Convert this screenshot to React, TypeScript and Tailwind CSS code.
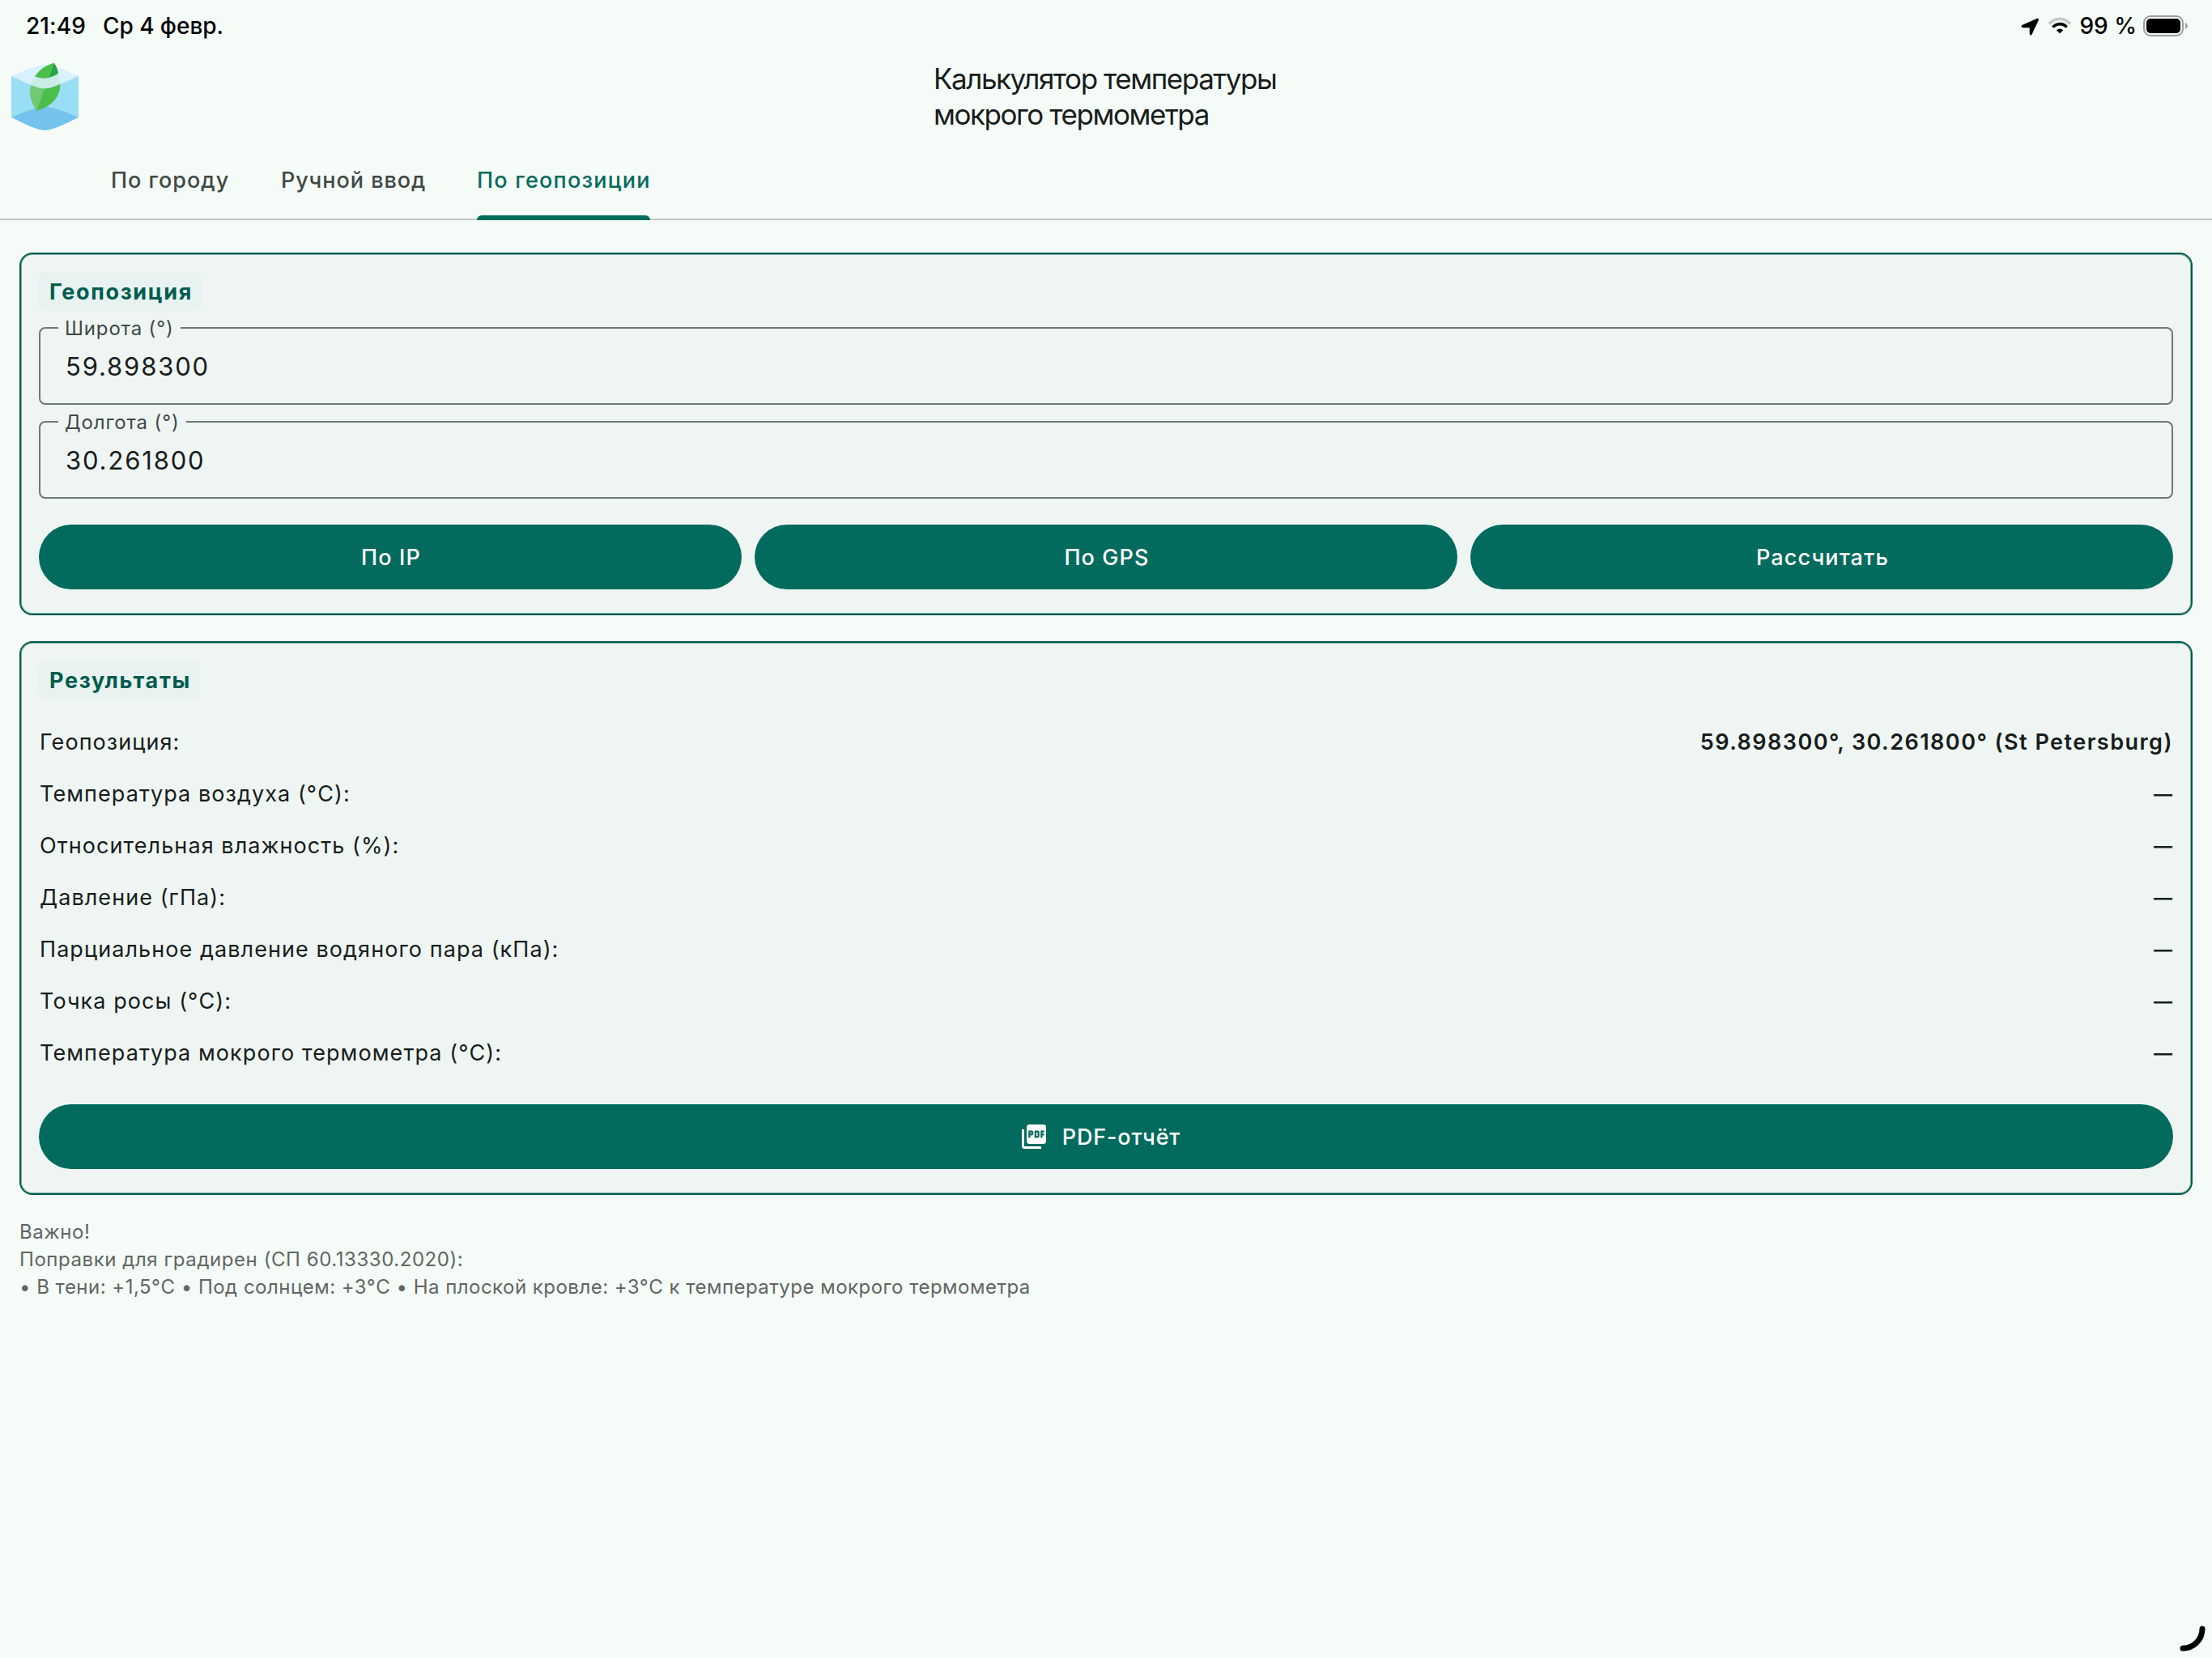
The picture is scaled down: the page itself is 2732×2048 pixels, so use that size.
import React from 'react';
import { MdPictureAsPdf } from 'react-icons/md';

const rows = [
  { label: 'Геопозиция:', value: '59.898300°, 30.261800° (St Petersburg)' },
  { label: 'Температура воздуха (°C):' },
  { label: 'Относительная влажность (%):' },
  { label: 'Давление (гПа):' },
  { label: 'Парциальное давление водяного пара (кПа):' },
  { label: 'Точка росы (°C):' },
  { label: 'Температура мокрого термометра (°C):' },
];

const Logo: React.FC = () => (
  <svg className="w-[84px] h-[84px]" viewBox="42 232 252 252">
    <path d="M42 283L42 435Q140 396 166 396Q195 396 291 435L291 283Z" fill="#98def5" />
    <path d="M42 435Q135 396 166 396Q198 396 291 435Q198 484 166 484Q135 484 42 435Z" fill="#73c3ec" />
    <path d="M42 283Q135 240 166 240Q198 240 291 283Q195 329 166 329Q138 329 42 283Z" fill="#d9f1fc" />
    {/* leaf under water */}
    <path d="M135 411C108 370 107 330 116 317Q150 330 165 329Z" fill="#6fca70" />
    <path d="M135 411L165 329Q185 329 223 312C224 365 185 398 135 411Z" fill="#4cbe4c" />
    {/* leaf seen through the surface */}
    <path d="M116 317C119 304 124 294 129 284Q155 298 216 274C220 286 223 298 223 312Q185 329 165 329Q150 330 116 317Z" fill="#c9ece6" />
    {/* leaf tip above the cube */}
    <path d="M129 284C145 259 172 241 201 234L183 289Q150 295 129 284Z" fill="#4cbe4c" />
    <path d="M201 234C208 245 214 258 216 273Q200 284 182 288Z" fill="#27a445" />
  </svg>
);

const StatusBar: React.FC = () => (
  <div className="flex items-center justify-between h-16 pl-8 pr-[29px] text-[28px] font-medium text-black">
    <div className="flex items-center">
      <span className="w-[95px] tracking-[0.1px]">21:49</span>
      <span className="tracking-[-0.06px]">Ср 4 февр.</span>
    </div>
    <div className="flex items-center">
      <svg className="w-6 h-6 mr-[10px]" viewBox="0 0 24 24">
        <path
          d="M2.5 11.3L20.8 3.2Q23.3 2.6 22.5 5L14.2 22.4Q12.6 24.6 12 22V13.9H3.5Q0.6 13.1 2.5 11.3Z"
          fill="#000"
          stroke="#000"
          strokeWidth="0.6"
          strokeLinejoin="round"
        />
      </svg>
      <svg className="w-[30px] h-[22px] mr-[9px]" viewBox="0 0 30 22" fill="none">
        <path d="M2 8.6Q7.5 2.3 15 2.3T28 8.6" stroke="#c4cac6" strokeWidth="3.6" />
        <path d="M6.4 12.5Q10 8.7 15 8.7T23.6 12.5" stroke="#000" strokeWidth="3.8" />
        <path d="M15 20.3L10.8 16.3Q15 12.9 19.2 16.3Z" fill="#000" />
      </svg>
      <span>99 %</span>
      <svg className="w-[56px] h-[26px] ml-[8px]" viewBox="0 0 56 26">
        <rect x="1" y="1" width="48" height="24" rx="8" fill="none" stroke="#9a9f9c" strokeWidth="2" />
        <rect x="4" y="4" width="42" height="18" rx="5" fill="#000" />
        <path d="M52 9Q55 10.5 55 13T52 17Z" fill="#9a9f9c" />
      </svg>
    </div>
  </div>
);

const Card: React.FC<{ title: string; children: React.ReactNode }> = ({ title, children }) => (
  <section className="flex flex-col items-stretch border-2 border-[#005c4e] rounded-[16px] bg-[#eff5f3] shadow-[inset_0_0_0_1px_#7fada4] px-[22px] pt-[22px] pb-[30px]">
    <h2 className="self-start h-12 pl-[13px] pr-[11px] rounded-lg bg-[#e8f2f0] text-[27px] leading-[50px] font-bold tracking-[1.66px] text-[#005c4e]">
      {title}
    </h2>
    {children}
  </section>
);

const Field: React.FC<{ label: string; value: string }> = ({ label, value }) => (
  <div className="relative mt-5 flex items-center h-24 pl-[31px] border-2 border-[#6f7977] rounded-[8px]">
    <span className="absolute left-[22px] top-[-15px] pl-[8px] pr-[8px] bg-[#eff5f3] text-2xl leading-[30px] tracking-[0.85px] text-[#3f4946]">
      {label}
    </span>
    <span className="pt-[2px] text-[31px] tracking-[1.85px] text-[#171d1b]">{value}</span>
  </div>
);

const Button: React.FC<{ children: React.ReactNode }> = ({ children }) => (
  <button className="flex-1 flex items-center justify-center h-20 pl-[2px] rounded-full bg-[#036b5d] text-white text-[27px] leading-[42px] font-medium tracking-[1.1px]">
    {children}
  </button>
);

const App: React.FC = () => {
  return (
    <div className="relative w-[2732px] h-[2048px] overflow-hidden bg-[#f5fbf7] font-['Inter','Noto_Sans',sans-serif]">
      <StatusBar />

      {/* Header */}
      <header className="grid grid-cols-[1fr_auto_1fr] items-center h-[110px] px-[14px]">
        <Logo />
        <h1 className="w-[426px] text-[35px] leading-[44px] tracking-[-1.45px] text-[#171d1b] whitespace-nowrap">
          Калькулятор температуры
          <br />
          мокрого термометра
        </h1>
      </header>

      {/* Tabs */}
      <nav className="flex h-[98px] pl-[137px] border-b-2 border-[#bec9c5] text-[27px] font-medium text-[#3f4946]">
        <div className="w-[210px] leading-[98px] tracking-[1px]">По городу</div>
        <div className="w-[242px] leading-[98px] tracking-[0.95px]">Ручной ввод</div>
        <div className="relative w-[214px] leading-[98px] tracking-[1.24px] whitespace-nowrap text-[#036b5d]">
          По геопозиции
          <span className="absolute left-0 bottom-[-2px] w-full h-[6px] rounded-t-[6px] bg-[#036b5d]" />
        </div>
      </nav>

      <main className="flex flex-col gap-8 px-6 pt-10">
        <Card title="Геопозиция">
          <Field label="Широта (°)" value="59.898300" />
          <Field label="Долгота (°)" value="30.261800" />
          <div className="flex gap-4 mt-8">
            <Button>
              <span className="pt-[2px]">По IP</span>
            </Button>
            <Button>
              <span className="pt-[2px]">По GPS</span>
            </Button>
            <Button>
              <span className="pt-[2px]">Рассчитать</span>
            </Button>
          </div>
        </Card>

        <Card title="Результаты">
          <div className="mt-[21px] text-[27px] text-[#171d1b]">
            {rows.map((row) => (
              <div key={row.label} className="flex items-center justify-between h-16">
                <span className="pl-px tracking-[1.07px]">{row.label}</span>
                {row.value ? (
                  <span className="font-semibold tracking-[1.47px]">{row.value}</span>
                ) : (
                  <span className="pt-[1px] pr-[1px] text-[23px] font-semibold">—</span>
                )}
              </div>
            ))}
          </div>
          <div className="flex mt-[31px]">
            <Button>
              <MdPictureAsPdf className="w-9 h-9 mr-[17px]" />
              <span className="pt-[2px] pr-[17px] tracking-[0.81px]">PDF-отчёт</span>
            </Button>
          </div>
        </Card>
      </main>

      {/* Notes */}
      <footer className="px-6 pt-[29px] text-2xl leading-[34px] tracking-[0.56px] text-[#616664]">
        <p>Важно!</p>
        <p>Поправки для градирен (СП 60.13330.2020):</p>
        <p className="tracking-[0.48px]">
          • В тени: +1,5°C • Под солнцем: +3°C • На плоской кровле: +3°C к температуре мокрого термометра
        </p>
      </footer>

      {/* Corner handle */}
      <svg className="absolute right-2 bottom-2 w-8 h-8" viewBox="0 0 32 32" fill="none">
        <path d="M4 28A24 24 0 0 0 28 4" stroke="#000" strokeWidth="7" strokeLinecap="round" />
      </svg>
    </div>
  );
};

export default App;
